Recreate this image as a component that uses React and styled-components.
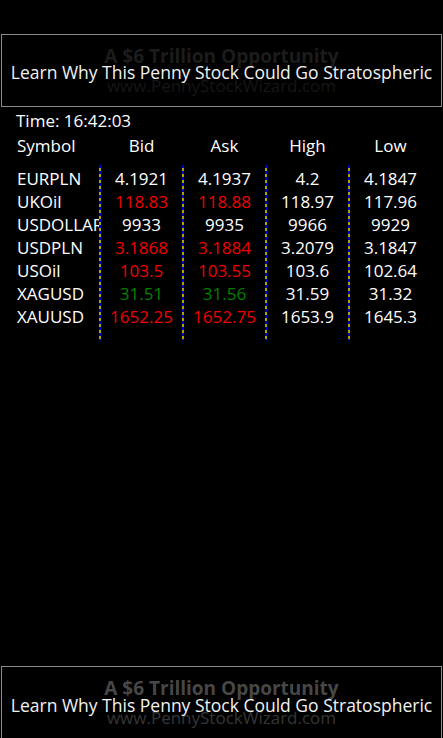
import React from "react";
import styled, { createGlobalStyle } from "styled-components";

const GlobalStyle = createGlobalStyle`
  html, body {
    margin: 0;
    padding: 0;
    background: #000;
  }
  body {
    font-family: "Open Sans", "Noto Sans", sans-serif;
    color: #fff;
  }
`;

const Page = styled.div`
  width: 443px;
  height: 738px;
  overflow: hidden;
  display: flex;
  flex-direction: column;
  background: #000;
`;

const AdBanner = styled.div`
  position: relative;
  flex: none;
  height: 71px;
  margin: ${(props) => (props.bottom ? "auto 1px 0 1px" : "34px 1px 0 1px")};
  border: 1px solid #8c8c8c;
  border-bottom-width: ${(props) => (props.bottom ? "0" : "1px")};
  display: flex;
  flex-direction: column;
  align-items: center;
  background: #000;
`;

const AdHeadline = styled.div`
  margin-top: 9px;
  font-weight: 700;
  font-size: 19px;
  line-height: 24px;
  color: ${(props) => (props.dim ? "#1c1c1c" : "#474747")};
`;

const AdUrl = styled.div`
  margin-top: 6px;
  font-size: 17px;
  line-height: 24px;
  color: ${(props) => (props.dim ? "#161616" : "#363636")};
`;

const AdOverlay = styled.div`
  position: absolute;
  left: 0;
  right: 0;
  top: ${(props) => props.top}px;
  text-align: center;
  font-size: 17.5px;
  line-height: 22px;
  color: #f2f2f2;
  white-space: nowrap;
`;

const Quotes = styled.div`
  padding: 2px 0 0 16px;
`;

const TimeLine = styled.div`
  font-size: 17px;
  line-height: 24px;
  color: #fff;
`;

const HeaderRow = styled.div`
  display: grid;
  grid-template-columns: repeat(5, 83px);
  font-size: 17px;
  line-height: 26px;
`;

const HeaderCell = styled.div`
  text-align: ${(props) => (props.left ? "left" : "center")};
  padding-left: ${(props) => (props.left ? "1px" : "2px")};
`;

const Body = styled.div`
  display: grid;
  grid-template-columns: repeat(5, 83px);
  margin-top: 6px;
`;

const Column = styled.div`
  display: flex;
  flex-direction: column;
  padding: 2px 0 12px 0;
  background-image: ${(props) =>
    props.divider
      ? "repeating-linear-gradient(to bottom, #0000c8 0 3px, #b4a400 3px 6px)"
      : "none"};
  background-size: 2px 100%;
  background-repeat: no-repeat;
`;

const Cell = styled.div`
  font-size: 17px;
  line-height: 23px;
  height: 23px;
  white-space: nowrap;
  overflow: hidden;
  text-align: ${(props) => (props.left ? "left" : "center")};
  padding-left: ${(props) => (props.left ? "1px" : "2px")};
  color: ${(props) =>
    props.tone === "down" ? "#f00000" : props.tone === "up" ? "#008000" : "#fff"};
`;

const quotes = [
  { symbol: "EURPLN", bid: "4.1921", ask: "4.1937", high: "4.2", low: "4.1847", tone: "" },
  { symbol: "UKOil", bid: "118.83", ask: "118.88", high: "118.97", low: "117.96", tone: "down" },
  { symbol: "USDOLLAR", bid: "9933", ask: "9935", high: "9966", low: "9929", tone: "" },
  { symbol: "USDPLN", bid: "3.1868", ask: "3.1884", high: "3.2079", low: "3.1847", tone: "down" },
  { symbol: "USOil", bid: "103.5", ask: "103.55", high: "103.6", low: "102.64", tone: "down" },
  { symbol: "XAGUSD", bid: "31.51", ask: "31.56", high: "31.59", low: "31.32", tone: "up" },
  { symbol: "XAUUSD", bid: "1652.25", ask: "1652.75", high: "1653.9", low: "1645.3", tone: "down" },
];

const Ad = ({ bottom }) => (
  <AdBanner bottom={bottom}>
    <AdHeadline dim={!bottom}>A $6 Trillion Opportunity</AdHeadline>
    <AdUrl dim={!bottom}>www.PennyStockWizard.com</AdUrl>
    <AdOverlay top={bottom ? 27 : 26}>
      Learn Why This Penny Stock Could Go Stratospheric
    </AdOverlay>
  </AdBanner>
);

const App = () => {
  return (
    <Page>
      <GlobalStyle />
      <Ad />

      <Quotes>
        <TimeLine>Time: 16:42:03</TimeLine>
        <HeaderRow>
          <HeaderCell left>Symbol</HeaderCell>
          <HeaderCell>Bid</HeaderCell>
          <HeaderCell>Ask</HeaderCell>
          <HeaderCell>High</HeaderCell>
          <HeaderCell>Low</HeaderCell>
        </HeaderRow>

        <Body>
          <Column>
            {quotes.map((q) => (
              <Cell left key={q.symbol}>
                {q.symbol}
              </Cell>
            ))}
          </Column>
          <Column divider>
            {quotes.map((q) => (
              <Cell tone={q.tone} key={q.symbol}>
                {q.bid}
              </Cell>
            ))}
          </Column>
          <Column divider>
            {quotes.map((q) => (
              <Cell tone={q.tone} key={q.symbol}>
                {q.ask}
              </Cell>
            ))}
          </Column>
          <Column divider>
            {quotes.map((q) => (
              <Cell key={q.symbol}>{q.high}</Cell>
            ))}
          </Column>
          <Column divider>
            {quotes.map((q) => (
              <Cell key={q.symbol}>{q.low}</Cell>
            ))}
          </Column>
        </Body>
      </Quotes>

      <Ad bottom />
    </Page>
  );
};

export default App;
